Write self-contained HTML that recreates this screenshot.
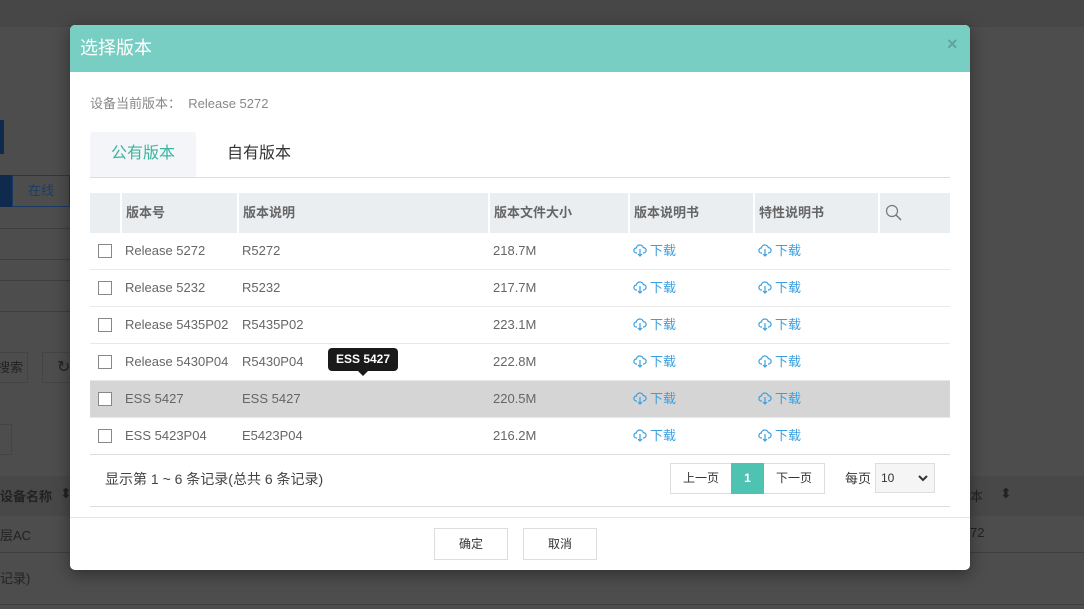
<!DOCTYPE html>
<html><head><meta charset="utf-8"><style>
*{margin:0;padding:0;box-sizing:border-box}
body{width:1084px;height:609px;overflow:hidden;background:#4d4d4d;font-family:"Liberation Sans","Noto Sans CJK SC",sans-serif;position:relative}
.a{position:absolute}
.bg{color:#222}
.m{left:70px;top:25px;width:900px;height:545px;background:#fff;border-radius:5px;overflow:hidden;box-shadow:0 4px 16px rgba(0,0,0,.4)}
.hd{left:0;top:0;width:900px;height:47px;background:#79cec3;color:#fff;font-size:18px;line-height:46px;padding-left:10px}
.cell{position:absolute;font-size:13px;line-height:37px;color:#666}
.th{font-weight:bold;color:#666;line-height:40px}
.cb{position:absolute;width:14px;height:14px;border:1px solid #888;background:#fff}
.dl{position:absolute;color:#3a9fe0;font-size:13px;line-height:37px}
.dl svg{vertical-align:-2px;margin-right:3px}
.btn{position:absolute;border:1px solid #ddd;font-size:12px;text-align:center;color:#333;background:#fff}
</style></head><body>
<div class="a" style="left:0;top:0;width:1084px;height:27px;background:#474747"></div>
<div class="a" style="left:0;top:120px;width:4px;height:34px;background:#0f2a4d"></div>
<div class="a" style="left:0;top:175px;width:12px;height:32px;background:#0f2a4d"></div>
<div class="a" style="left:12px;top:175px;width:58px;height:32px;border:1px solid #1a3a66;color:#1d3d66;font-size:13px;line-height:30px;text-align:center">在线</div>
<div class="a" style="left:0;top:228px;width:70px;height:1px;background:#3e3e3e"></div>
<div class="a" style="left:0;top:259px;width:70px;height:1px;background:#3e3e3e"></div>
<div class="a" style="left:0;top:280px;width:70px;height:1px;background:#3e3e3e"></div>
<div class="a" style="left:0;top:311px;width:70px;height:1px;background:#3e3e3e"></div>
<div class="a" style="left:-10px;top:352px;width:38px;height:31px;border:1px solid #444;color:#222;font-size:13px;line-height:30px;text-align:right;padding-right:4px">搜索</div>
<div class="a" style="left:42px;top:352px;width:30px;height:31px;border:1px solid #444;color:#222;font-size:16px;line-height:30px;padding-left:14px">↻</div>
<div class="a" style="left:-10px;top:424px;width:22px;height:31px;border:1px solid #444"></div>
<div class="a" style="left:0;top:476px;width:1084px;height:40px;background:#484848"></div>
<div class="a bg" style="left:0;top:486px;font-size:13px;font-weight:bold">设备名称</div>
<div class="a bg" style="left:60px;top:485px;font-size:14px">⬍</div>
<div class="a bg" style="left:970px;top:486px;font-size:13px">本</div>
<div class="a bg" style="left:1000px;top:485px;font-size:14px">⬍</div>
<div class="a bg" style="left:0;top:525px;font-size:13px">层AC</div>
<div class="a bg" style="left:970px;top:525px;font-size:13px">72</div>
<div class="a" style="left:0;top:552px;width:1084px;height:1px;background:#3e3e3e"></div>
<div class="a bg" style="left:0;top:568px;font-size:13px">记录)</div>
<div class="a" style="left:0;top:604px;width:1084px;height:1px;background:#3e3e3e"></div>

<div class="a m">
<div class="a hd">选择版本</div>
<div class="a" style="left:877px;top:9px;color:#5fa59c;font-size:18px;font-weight:bold">×</div>
<div class="a" style="left:20px;top:68px;font-size:13px;color:#888">设备当前版本：&nbsp;&nbsp;Release 5272</div>
<div class="a" style="left:20px;top:107px;width:106px;height:45px;background:#f4f5f8;border-radius:3px 3px 0 0;color:#3bb5a0;font-size:16px;line-height:44px;text-align:center">公有版本</div>
<div class="a" style="left:157px;top:107px;font-size:16px;line-height:44px;color:#333">自有版本</div>
<div class="a" style="left:20px;top:152px;width:860px;height:1px;background:#ddd"></div>
<div class="a" style="left:20px;top:168px;width:860px;height:40px;background:#ebeef1"></div>
<div class="a" style="left:50px;top:168px;width:2px;height:40px;background:#fff"></div>
<div class="a" style="left:167px;top:168px;width:2px;height:40px;background:#fff"></div>
<div class="a" style="left:418px;top:168px;width:2px;height:40px;background:#fff"></div>
<div class="a" style="left:558px;top:168px;width:2px;height:40px;background:#fff"></div>
<div class="a" style="left:683px;top:168px;width:2px;height:40px;background:#fff"></div>
<div class="a" style="left:808px;top:168px;width:2px;height:40px;background:#fff"></div>
<div class="cell th" style="left:56px;top:168px">版本号</div>
<div class="cell th" style="left:173px;top:168px">版本说明</div>
<div class="cell th" style="left:424px;top:168px">版本文件大小</div>
<div class="cell th" style="left:564px;top:168px">版本说明书</div>
<div class="cell th" style="left:689px;top:168px">特性说明书</div>
<svg class="a" style="left:815px;top:179px" width="18" height="18" viewBox="0 0 18 18"><circle cx="7" cy="7" r="5.5" fill="none" stroke="#777" stroke-width="1.2"/><path d="M11 11l5 5" stroke="#777" stroke-width="1.5"/></svg>
<div class="a" style="left:20px;top:355px;width:860px;height:37px;background:#d5d5d5"></div>
<div class="a" style="left:20px;top:244px;width:860px;height:1px;background:#e8e8e8"></div>
<div class="a" style="left:20px;top:281px;width:860px;height:1px;background:#e8e8e8"></div>
<div class="a" style="left:20px;top:318px;width:860px;height:1px;background:#e8e8e8"></div>
<div class="a" style="left:20px;top:355px;width:860px;height:1px;background:#e8e8e8"></div>
<div class="a" style="left:20px;top:392px;width:860px;height:1px;background:#e8e8e8"></div>
<div class="a" style="left:20px;top:429px;width:860px;height:1px;background:#ddd"></div>

<div class="cb" style="left:28px;top:219px"></div><div class="cell" style="left:55px;top:207px">Release 5272</div><div class="cell" style="left:172px;top:207px">R5272</div><div class="cell" style="left:423px;top:207px">218.7M</div>
<div class="cb" style="left:28px;top:256px"></div><div class="cell" style="left:55px;top:244px">Release 5232</div><div class="cell" style="left:172px;top:244px">R5232</div><div class="cell" style="left:423px;top:244px">217.7M</div>
<div class="cb" style="left:28px;top:293px"></div><div class="cell" style="left:55px;top:281px">Release 5435P02</div><div class="cell" style="left:172px;top:281px">R5435P02</div><div class="cell" style="left:423px;top:281px">223.1M</div>
<div class="cb" style="left:28px;top:330px"></div><div class="cell" style="left:55px;top:318px">Release 5430P04</div><div class="cell" style="left:172px;top:318px">R5430P04</div><div class="cell" style="left:423px;top:318px">222.8M</div>
<div class="cb" style="left:28px;top:367px"></div><div class="cell" style="left:55px;top:355px">ESS 5427</div><div class="cell" style="left:172px;top:355px">ESS 5427</div><div class="cell" style="left:423px;top:355px">220.5M</div>
<div class="cb" style="left:28px;top:404px"></div><div class="cell" style="left:55px;top:392px">ESS 5423P04</div><div class="cell" style="left:172px;top:392px">E5423P04</div><div class="cell" style="left:423px;top:392px">216.2M</div>

<div class="dl" style="left:563px;top:207px"><svg width="14" height="14" viewBox="0 0 14 14"><path d="M4 10H3.5A2.5 2.5 0 0 1 3.3 5 3.6 3.6 0 0 1 10.3 4.6 2.7 2.7 0 0 1 10.5 10H10M7 6v7M5 11l2 2 2-2" fill="none" stroke="#3a9fe0" stroke-width="1.2"/></svg>下载</div>
<div class="dl" style="left:688px;top:207px"><svg width="14" height="14" viewBox="0 0 14 14"><path d="M4 10H3.5A2.5 2.5 0 0 1 3.3 5 3.6 3.6 0 0 1 10.3 4.6 2.7 2.7 0 0 1 10.5 10H10M7 6v7M5 11l2 2 2-2" fill="none" stroke="#3a9fe0" stroke-width="1.2"/></svg>下载</div>
<div class="dl" style="left:563px;top:244px"><svg width="14" height="14" viewBox="0 0 14 14"><path d="M4 10H3.5A2.5 2.5 0 0 1 3.3 5 3.6 3.6 0 0 1 10.3 4.6 2.7 2.7 0 0 1 10.5 10H10M7 6v7M5 11l2 2 2-2" fill="none" stroke="#3a9fe0" stroke-width="1.2"/></svg>下载</div>
<div class="dl" style="left:688px;top:244px"><svg width="14" height="14" viewBox="0 0 14 14"><path d="M4 10H3.5A2.5 2.5 0 0 1 3.3 5 3.6 3.6 0 0 1 10.3 4.6 2.7 2.7 0 0 1 10.5 10H10M7 6v7M5 11l2 2 2-2" fill="none" stroke="#3a9fe0" stroke-width="1.2"/></svg>下载</div>
<div class="dl" style="left:563px;top:281px"><svg width="14" height="14" viewBox="0 0 14 14"><path d="M4 10H3.5A2.5 2.5 0 0 1 3.3 5 3.6 3.6 0 0 1 10.3 4.6 2.7 2.7 0 0 1 10.5 10H10M7 6v7M5 11l2 2 2-2" fill="none" stroke="#3a9fe0" stroke-width="1.2"/></svg>下载</div>
<div class="dl" style="left:688px;top:281px"><svg width="14" height="14" viewBox="0 0 14 14"><path d="M4 10H3.5A2.5 2.5 0 0 1 3.3 5 3.6 3.6 0 0 1 10.3 4.6 2.7 2.7 0 0 1 10.5 10H10M7 6v7M5 11l2 2 2-2" fill="none" stroke="#3a9fe0" stroke-width="1.2"/></svg>下载</div>
<div class="dl" style="left:563px;top:318px"><svg width="14" height="14" viewBox="0 0 14 14"><path d="M4 10H3.5A2.5 2.5 0 0 1 3.3 5 3.6 3.6 0 0 1 10.3 4.6 2.7 2.7 0 0 1 10.5 10H10M7 6v7M5 11l2 2 2-2" fill="none" stroke="#3a9fe0" stroke-width="1.2"/></svg>下载</div>
<div class="dl" style="left:688px;top:318px"><svg width="14" height="14" viewBox="0 0 14 14"><path d="M4 10H3.5A2.5 2.5 0 0 1 3.3 5 3.6 3.6 0 0 1 10.3 4.6 2.7 2.7 0 0 1 10.5 10H10M7 6v7M5 11l2 2 2-2" fill="none" stroke="#3a9fe0" stroke-width="1.2"/></svg>下载</div>
<div class="dl" style="left:563px;top:355px"><svg width="14" height="14" viewBox="0 0 14 14"><path d="M4 10H3.5A2.5 2.5 0 0 1 3.3 5 3.6 3.6 0 0 1 10.3 4.6 2.7 2.7 0 0 1 10.5 10H10M7 6v7M5 11l2 2 2-2" fill="none" stroke="#3a9fe0" stroke-width="1.2"/></svg>下载</div>
<div class="dl" style="left:688px;top:355px"><svg width="14" height="14" viewBox="0 0 14 14"><path d="M4 10H3.5A2.5 2.5 0 0 1 3.3 5 3.6 3.6 0 0 1 10.3 4.6 2.7 2.7 0 0 1 10.5 10H10M7 6v7M5 11l2 2 2-2" fill="none" stroke="#3a9fe0" stroke-width="1.2"/></svg>下载</div>
<div class="dl" style="left:563px;top:392px"><svg width="14" height="14" viewBox="0 0 14 14"><path d="M4 10H3.5A2.5 2.5 0 0 1 3.3 5 3.6 3.6 0 0 1 10.3 4.6 2.7 2.7 0 0 1 10.5 10H10M7 6v7M5 11l2 2 2-2" fill="none" stroke="#3a9fe0" stroke-width="1.2"/></svg>下载</div>
<div class="dl" style="left:688px;top:392px"><svg width="14" height="14" viewBox="0 0 14 14"><path d="M4 10H3.5A2.5 2.5 0 0 1 3.3 5 3.6 3.6 0 0 1 10.3 4.6 2.7 2.7 0 0 1 10.5 10H10M7 6v7M5 11l2 2 2-2" fill="none" stroke="#3a9fe0" stroke-width="1.2"/></svg>下载</div>

<div class="a" style="left:258px;top:323px;width:70px;height:23px;background:#1a1a1a;border-radius:4px;color:#fff;font-size:12px;font-weight:bold;line-height:23px;text-align:center">ESS 5427</div>
<div class="a" style="left:288px;top:346px;width:0;height:0;border-left:5px solid transparent;border-right:5px solid transparent;border-top:5px solid #1a1a1a"></div>

<div class="a" style="left:35px;top:444px;font-size:14px;color:#444">显示第 1 ~ 6 条记录(总共 6 条记录)</div>
<div class="btn" style="left:600px;top:438px;width:62px;height:31px;line-height:29px">上一页</div>
<div class="a" style="left:661px;top:438px;width:33px;height:31px;background:#4fc3b2;color:#fff;font-size:12px;line-height:31px;text-align:center;font-weight:bold">1</div>
<div class="btn" style="left:694px;top:438px;width:61px;height:31px;line-height:29px;border-left:none">下一页</div>
<div class="a" style="left:775px;top:443px;font-size:13px;color:#333">每页</div>
<div class="a" style="left:805px;top:438px;width:60px;height:30px;background:#f5f5f5;border:1px solid #ddd;font-size:12px;line-height:28px;padding-left:5px;color:#333">10<svg style="position:absolute;right:6px;top:11px" width="10" height="7" viewBox="0 0 10 7"><path d="M1 1l4 4 4-4" fill="none" stroke="#333" stroke-width="2"/></svg></div>
<div class="a" style="left:20px;top:481px;width:860px;height:1px;background:#ddd"></div>
<div class="a" style="left:0;top:492px;width:900px;height:1px;background:#e5e5e5"></div>
<div class="btn" style="left:364px;top:503px;width:74px;height:32px;line-height:30px">确定</div>
<div class="btn" style="left:453px;top:503px;width:74px;height:32px;line-height:30px">取消</div>
</div>
</body></html>
